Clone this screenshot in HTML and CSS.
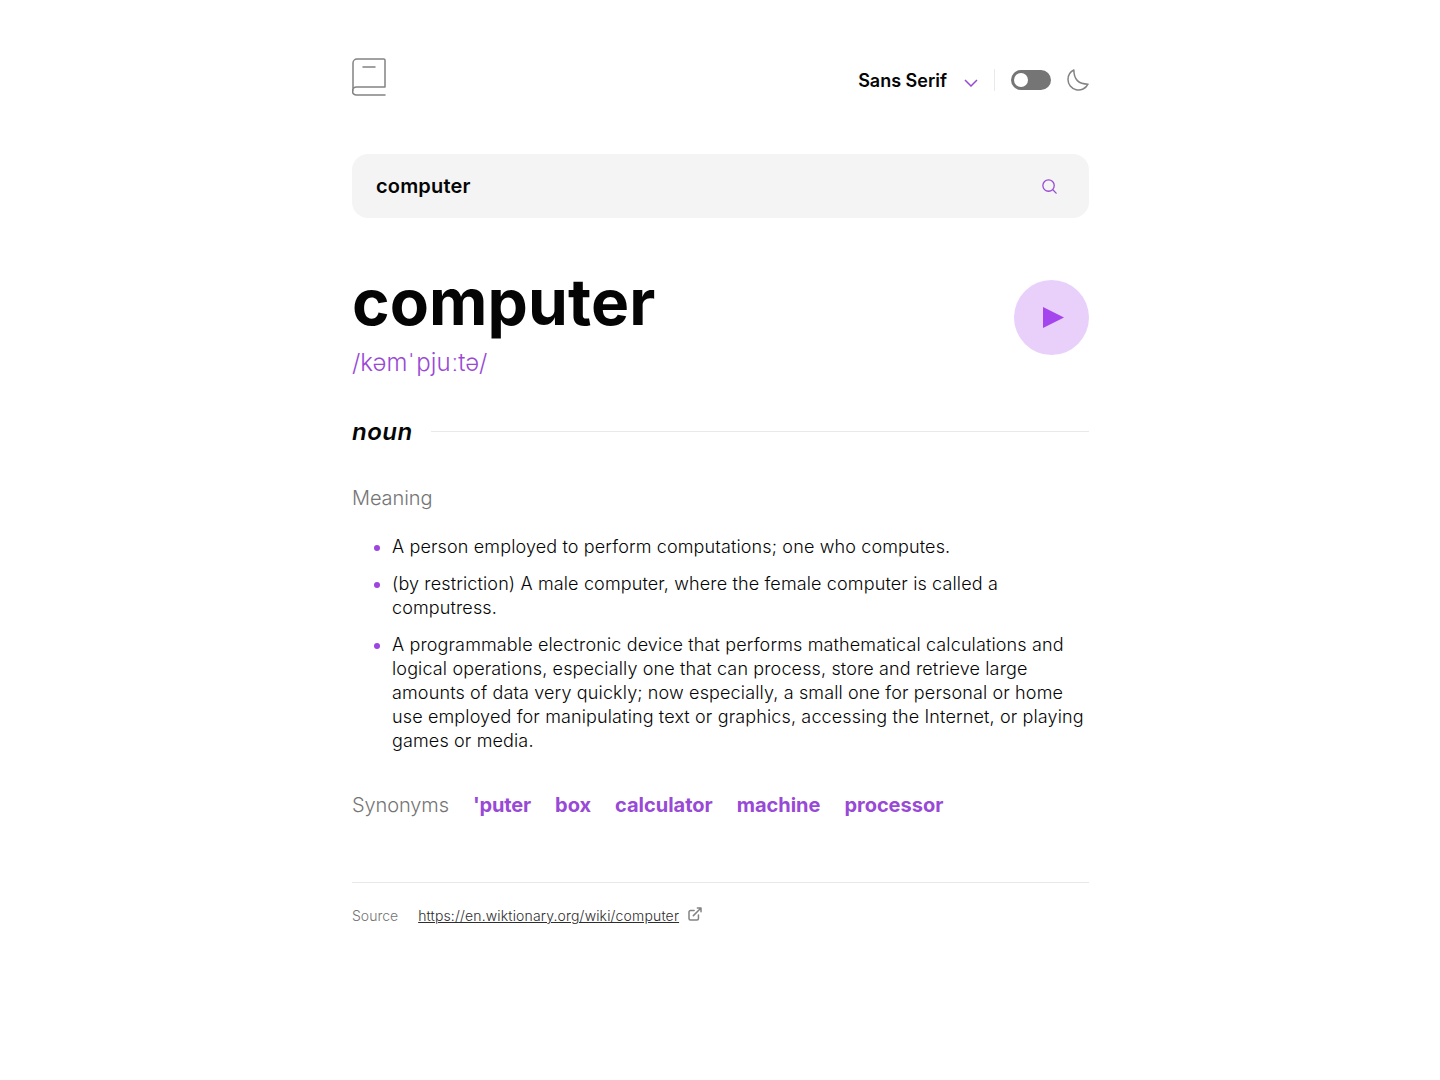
FILE: index.html
```html
<!DOCTYPE html>
<html lang="en">
<head>
<meta charset="utf-8">
<title>Dictionary</title>
<link rel="stylesheet" href="styles.css">
</head>
<body>
<main class="page">
  <header class="header">
    <svg class="logo" width="34" height="38" viewBox="0 0 34 38" fill="none" stroke="#838383" stroke-width="1.5" stroke-linecap="round" stroke-linejoin="round"><path d="M1 33V5a4 4 0 0 1 4-4h26.800a1.200 1.200 0 0 1 1.200 1.200v26.900M5 29.100h28M5 37h28M5 37a4 4 0 1 1 0-7.900M11 9h12"/></svg>
    <div class="controls">
      <button class="font-picker"><span>Sans Serif</span><svg width="14" height="8" viewBox="0 0 14 8" fill="none" stroke="#9849D6" stroke-width="1.5"><path d="m1 1 6 6 6-6"/></svg></button>
      <div class="theme">
        <span class="toggle"><span class="knob"></span></span>
        <svg width="22" height="22" viewBox="0 0 22 22" fill="none" stroke="#838383" stroke-width="1.5" stroke-linecap="round" stroke-linejoin="round"><path d="M1 10.449a10.544 10.544 0 0 0 19.993 4.686C11.544 15.135 6.858 10.448 6.858 1A10.545 10.545 0 0 0 1 10.449Z"/></svg>
      </div>
    </div>
  </header>
  <div class="search">
    <span>computer</span>
    <svg width="15" height="15" viewBox="0 0 17.550 17.550" fill="none" stroke="#9849D6" stroke-width="1.5" stroke-linecap="round" stroke-linejoin="round"><path d="m12.663 12.663 3.887 3.887M1 7.664a6.665 6.665 0 1 0 13.330 0 6.665 6.665 0 0 0-13.330 0Z"/></svg>
  </div>
  <section class="word">
    <div>
      <h1>computer</h1>
      <p class="phonetic">/kəm<span class="stress">ˈ</span>pju<span class="length">ː</span>tə/</p>
    </div>
    <svg class="play" width="75" height="75" viewBox="0 0 75 75"><circle cx="37.500" cy="37.500" r="37.500" fill="#A445ED" opacity=".25"/><path d="M29 27v21l21-10.500z" fill="#A445ED"/></svg>
  </section>
  <div class="part"><h2>noun</h2><span class="rule"></span></div>
  <h3 class="label">Meaning</h3>
  <ul class="meanings">
    <li>A person employed to perform computations; one who computes.</li>
    <li>(by restriction) A male computer, where the female computer is called a computress.</li>
    <li>A programmable electronic device that performs mathematical calculations and logical operations, especially one that can process, store and retrieve large amounts of data very quickly; now especially, a small one for personal or home use employed for manipulating text or graphics, accessing the Internet, or playing games or media.</li>
  </ul>
  <div class="synonyms"><h3 class="label">Synonyms</h3><b>'puter</b><b>box</b><b>calculator</b><b>machine</b><b>processor</b></div>
  <footer class="source">
    <span class="source-label">Source</span>
    <a href="#">https://en.wiktionary.org/wiki/computer</a>
    <svg width="14" height="14" viewBox="0 0 14 14" fill="none" stroke="#838383" stroke-width="1.500" stroke-linecap="round" stroke-linejoin="round"><path d="M6.090 3.545H2.456A1.455 1.455 0 0 0 1 5v6.545A1.455 1.455 0 0 0 2.455 13H9a1.455 1.455 0 0 0 1.455-1.455V7.909m-5.091.727L13 1m0 0H9.364M13 1v3.636"/></svg>
  </footer>
</main>
</body>
</html>
```
FILE: styles.css
```css
* { box-sizing: border-box; margin: 0; padding: 0; }
body { background: #fff; color: #050505; font-family: Inter, sans-serif; }
.page { width: 737px; margin: 0 auto 0 352px; padding-top: 58px; }
.header { display: flex; justify-content: space-between; height: 96px; }
.controls { display: flex; align-items: center; height: 44px; }
.font-picker { display: flex; align-items: center; gap: 17px; border: 0; background: none; font: 600 18px/24px Inter, sans-serif; color: #050505; padding-right: 16px; }
.font-picker span { padding-top: 2px; }
.font-picker svg { margin-top: 5px; }
.theme { display: flex; align-items: center; gap: 16px; height: 22px; border-left: 1px solid #e9e9e9; padding-left: 16px; }
.toggle { width: 40px; height: 20px; border-radius: 10px; background: #757575; padding: 3px; }
.knob { display: block; width: 14px; height: 14px; border-radius: 50%; background: #fff; }
.search { display: flex; align-items: center; justify-content: space-between; height: 64px; border-radius: 16px; background: #f4f4f4; padding: 0 32px 0 24px; font-size: 20px; font-weight: 600; letter-spacing: .17px; }
.word { display: flex; justify-content: space-between; margin-top: 45px; }
h1 { font-size: 64px; line-height: 77px; font-weight: 700; letter-spacing: .1px; }
.phonetic { font-size: 24px; line-height: 29px; font-weight: 340; color: #9849d6; margin-top: 8px; }
.stress, .length { font-family: "Open Sans", sans-serif; font-weight: 300; line-height: 1; }
.stress { padding-right: 1px; }
.length { padding-left: 1px; }
.play { margin-top: 17px; }
.part { display: flex; align-items: center; gap: 18px; margin-top: 40px; }
h2 { font-size: 24px; line-height: 29px; font-weight: 600; font-style: italic; letter-spacing: .5px; }
.rule { flex: 1; height: 1px; background: #e9e9e9; }
.label { font-size: 20px; line-height: 24px; font-weight: 330; color: #757575; letter-spacing: -.1px; }
.part + .label { margin-top: 40px; }
.meanings { margin-top: 25px; padding-left: 40px; font-size: 18px; line-height: 24px; font-weight: 300; letter-spacing: .135px; list-style: disc; }
.meanings li + li { margin-top: 13px; }
.meanings li::marker { color: #9d45e0; }
.synonyms { display: flex; gap: 24px; margin-top: 40px; font-size: 20px; line-height: 24px; color: #9849d6; letter-spacing: -.02px; }
.synonyms b:nth-of-type(1) { letter-spacing: -.15px; }
.source { display: flex; align-items: center; border-top: 1px solid #e9e9e9; margin-top: 65px; padding-top: 24px; font-size: 14px; line-height: 17px; font-weight: 300; }
.source-label { color: #757575; margin-right: 20px; }
.source a { color: #2d2d2d; margin-right: 9px; letter-spacing: .155px; }
.source svg { margin-bottom: 3px; }
```
